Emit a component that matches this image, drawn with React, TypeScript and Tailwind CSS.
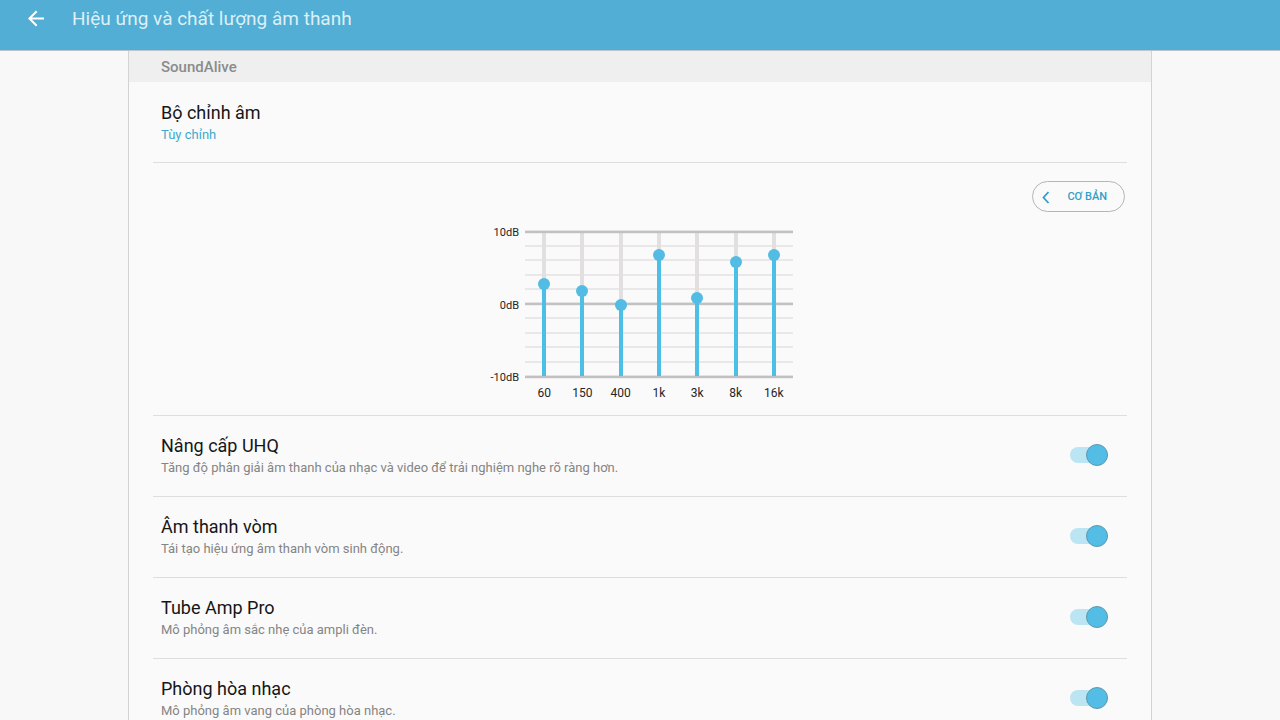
import { useId, useState } from "react";

type Band = { label: string; gain: number };

const initialBands: Band[] = [
  { label: "60", gain: 3 },
  { label: "150", gain: 2 },
  { label: "400", gain: 0 },
  { label: "1k", gain: 7 },
  { label: "3k", gain: 1 },
  { label: "8k", gain: 6 },
  { label: "16k", gain: 7 },
];

const effects = [
  {
    title: "Nâng cấp UHQ",
    text: "Tăng độ phân giải âm thanh của nhạc và video để trải nghiệm nghe rõ ràng hơn.",
  },
  { title: "Âm thanh vòm", text: "Tái tạo hiệu ứng âm thanh vòm sinh động." },
  { title: "Tube Amp Pro", text: "Mô phỏng âm sắc nhẹ của ampli đèn." },
  { title: "Phòng hòa nhạc", text: "Mô phỏng âm vang của phòng hòa nhạc." },
];

const minorLines = [16, 30, 45, 59, 88, 103, 117, 132];
const majorLines = [2, 74, 147];

const trackX = (index: number) => Math.round((268 / 7) * (index + 0.5) - 6) + 4;

function Equalizer() {
  const [bands, setBands] = useState(initialBands);

  const setGain = (index: number, gain: number) =>
    setBands(bands.map((band, i) => (i === index ? { ...band, gain } : band)));

  return (
    <div className="mt-3 flex justify-center pr-[2px] text-[#252525]">
      <div className="flex h-[162px] w-10 flex-col items-end justify-between pt-px pr-[6px] text-[11px] leading-4">
        <span>10dB</span>
        <span>0dB</span>
        <span>-10dB</span>
      </div>
      <div className="w-[268px]">
        <div className="relative h-[156px]">
          <svg
            className="absolute inset-0 h-full w-full"
            viewBox="0 -6 268 156"
            aria-hidden="true"
          >
            {minorLines.map((y) => (
              <rect key={y} x="0" y={y - 1} width="268" height="2" fill="#e9e7e8" />
            ))}
            {bands.map((band, i) => (
              <rect key={band.label} x={trackX(i)} y="2" width="4" height="145" fill="#e1dfe0" />
            ))}
            {majorLines.map((y) => (
              <rect key={y} x="0" y={y - 1.4} width="268" height="2.6" fill="#c2c1c2" />
            ))}
            {bands.map((band, i) => (
              <rect
                key={band.label}
                x={trackX(i)}
                y={74.5 - band.gain * 7.1}
                width="4"
                height={71.5 + band.gain * 7.1}
                fill="#4bbfe5"
              />
            ))}
          </svg>
          <div className="relative grid grid-cols-7 justify-items-center">
            {bands.map((band, i) => (
              <input
                key={band.label}
                type="range"
                min={-10}
                max={10}
                value={band.gain}
                aria-label={band.label}
                onChange={(e) => setGain(i, Number(e.target.value))}
                className="mt-1 h-[154px] w-3 appearance-none bg-transparent [direction:rtl] [writing-mode:vertical-lr] [&::-webkit-slider-thumb]:h-3 [&::-webkit-slider-thumb]:w-3 [&::-webkit-slider-thumb]:appearance-none [&::-webkit-slider-thumb]:rounded-full [&::-webkit-slider-thumb]:bg-[#52bce4]"
              />
            ))}
          </div>
        </div>
        <div className="mt-[5px] grid grid-cols-7 text-center text-[12px] leading-4">
          {bands.map((band) => (
            <span key={band.label}>{band.label}</span>
          ))}
        </div>
      </div>
    </div>
  );
}

function EffectRow({ title, text }: { title: string; text: string }) {
  const id = useId();
  const [on, setOn] = useState(true);
  return (
    <li className="flex items-start justify-between border-t border-[#dedede] pt-[18px] pr-[19px] pb-[18px] pl-2">
      <div>
        <label htmlFor={id} className="block text-[18px] leading-6 text-[#161616]">
          {title}
        </label>
        <p id={`${id}-text`} className="text-[13px] leading-5 text-[#858585]">
          {text}
        </p>
      </div>
      <input
        id={id}
        type="checkbox"
        role="switch"
        aria-describedby={`${id}-text`}
        checked={on}
        onChange={(e) => setOn(e.target.checked)}
        className="relative mt-[10px] h-[22px] w-[38px] shrink-0 cursor-pointer appearance-none before:absolute before:inset-x-0 before:top-[3px] before:h-4 before:rounded-full before:bg-[#d5d5d5] after:absolute after:top-0 after:left-0 after:size-[22px] after:rounded-full after:border after:border-[#5c99af] after:bg-[#f4f4f4] checked:before:bg-[#bbe5f2] checked:after:left-4 checked:after:bg-[#54bde5]"
      />
    </li>
  );
}

export default function App() {
  return (
    <div className="flex h-screen flex-col overflow-hidden bg-[#f8f8f8] font-['Roboto','Noto_Sans',sans-serif]">
      <header className="flex shrink-0 items-center gap-6 border-b border-[#b9c5ca] bg-[#52aed4] pt-[7px] pr-6 pb-[19px] pl-6">
        <button type="button" aria-label="Quay lại" className="text-white">
          <svg className="size-6" viewBox="0 0 24 24" fill="currentColor" aria-hidden="true">
            <path d="M20 10.5H7.83l5.59-5.59L12 3.5l-8 8 8 8 1.41-1.41L7.83 12.5H20v-2z" />
          </svg>
        </button>
        <h1 className="text-[19px] leading-6 text-[#dcf0f8]">Hiệu ứng và chất lượng âm thanh</h1>
      </header>

      <main className="mx-auto w-4/5 flex-1 overflow-y-auto border-x border-[#d3d3d3] bg-[#fafafa] [scrollbar-width:none]">
        <h2 className="bg-[#efefef] px-8 pt-[6px] pb-[5px] text-[15px] leading-5 font-medium text-[#8b8b8b]">
          SoundAlive
        </h2>
        <div className="px-6">
          <section className="border-b border-[#dedede] pt-[19px] pr-2 pb-[17px] pl-2">
            <h3 className="text-[18px] leading-6 text-[#161616]">Bộ chỉnh âm</h3>
            <p className="text-[13px] leading-5 text-[#3fa9cf]">Tùy chỉnh</p>
          </section>

          <section className="pt-[18px] pb-[14px]">
            <div className="flex justify-end">
              <button
                type="button"
                className="mr-[2px] flex h-[31px] items-center gap-[17px] rounded-full border border-[#b5b5b5] pt-px pr-[17px] pl-[9px] text-[11px] font-medium text-[#2f9fc8]"
              >
                <svg className="h-[13px] w-2" viewBox="0 0 8 13" fill="none" aria-hidden="true">
                  <path d="M6.5 1 1.5 6.5l5 5.5" stroke="currentColor" strokeWidth="1.8" />
                </svg>
                CƠ BẢN
              </button>
            </div>
            <Equalizer />
          </section>

          <ul>
            {effects.map((effect) => (
              <EffectRow key={effect.title} {...effect} />
            ))}
          </ul>
        </div>
      </main>
    </div>
  );
}
